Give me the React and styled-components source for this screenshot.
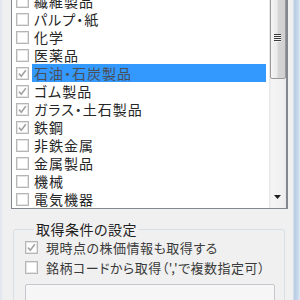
import React from 'react';
import styled, { createGlobalStyle } from 'styled-components';

const GlobalStyle = createGlobalStyle`
    html, body {
        margin: 0;
        padding: 0;
        background: #f0f0f0;
        overflow: hidden;
    }
    body {
        font-family: "Noto Sans CJK JP", "Noto Sans", sans-serif;
        font-feature-settings: "palt";
        color: #1e1e1e;
    }
`;

const Window = styled.div`
    display: flex;
    width: 300px;
    height: 300px;
    overflow: hidden;
    background: #f0f0f0;
`;

const LeftEdge = styled.div`
    width: 3px;
    background: linear-gradient(to right, #dfe5ec, #eceff3);
`;

const RightFrame = styled.div`
    width: 7px;
    background: linear-gradient(to right, #e4e9ef 0, #b9cde4 20%, #c6d8ec 70%, #e2ebf5 100%);
`;

const Main = styled.div`
    flex: 1;
    display: flex;
    flex-direction: column;
    padding: 0 5px 0 8px;
    min-width: 0;
`;

const ListBox = styled.div`
    display: flex;
    box-sizing: border-box;
    height: 223px;
    margin-top: -10px;
    border: 1px solid #828790;
    border-right-width: 2px;
    background: #fff;
`;

const Items = styled.div`
    flex: 1;
    overflow: hidden;
    padding: 1px 0 0 4px;
`;

const Row = styled.div`
    display: flex;
    align-items: center;
    height: 18px;
`;

const Label = styled.span`
    flex: 1;
    height: 18px;
    line-height: 18px;
    margin: 0 3px 0 3px;
    padding-left: 2px;
    font-size: 14px;
    letter-spacing: 1px;
    white-space: nowrap;
    color: ${(p) => (p.selected ? '#4a4f57' : '#262626')};
    background: ${(p) => (p.selected ? '#3399ff' : 'transparent')};
`;

const ScrollBar = styled.div`
    width: 17px;
    display: flex;
    flex-direction: column;
    background: linear-gradient(to right, #e6e6e6 0, #f4f4f4 15%, #f0f0f0 85%, #e8e8e8 100%);
`;

const Thumb = styled.div`
    height: 86px;
    margin: 0 0 0 1px;
    box-sizing: border-box;
    border: 1px solid #9a9a9a;
    border-radius: 2px;
    background: linear-gradient(to right, #f6f6f6, #e9e9e9 45%, #d6d6d6 50%, #d0d0d0);
    display: flex;
    align-items: center;
    justify-content: center;
    padding-bottom: 40px;
    padding-top: 46px;
`;

const Grip = styled.div`
    width: 7px;
    height: 8px;
    background: repeating-linear-gradient(to bottom, #3b3b3b 0, #3b3b3b 1px, #f4f4f4 1px, #f4f4f4 2px);
    margin-right: 2px;
`;

const Track = styled.div`
    flex: 1;
`;

const ArrowButton = styled.div`
    height: 17px;
    display: flex;
    align-items: flex-start;
    justify-content: center;
    padding-top: 4px;
    box-sizing: border-box;
`;

const Group = styled.fieldset`
    margin: 12px 0 0 2px;
    width: 272px;
    box-sizing: border-box;
    border: 1px solid #d5dfe5;
    border-radius: 3px;
    padding: 0 9px 0 11px;
    min-width: 0;
`;

const Legend = styled.legend`
    margin-left: 9px;
    padding: 0 2px;
    font-size: 14px;
    line-height: 16px;
    letter-spacing: 0.5px;
    color: #1e1e1e;
`;

const Option = styled.div`
    display: flex;
    align-items: center;
    height: 20px;
    gap: 8px;
    font-size: 13px;
    letter-spacing: 0.5px;
    color: #3a3a3a;
    white-space: nowrap;
`;

const CodeInput = styled.div`
    margin-top: 7px;
    height: 22px;
    border: 1px solid #c4c8cc;
    border-radius: 2px 2px 0 0;
    background: #f6f6f6;
`;

function CheckBox({ checked }) {
    return (
        <svg width="13" height="13" viewBox="0 0 13 13" style={{ flex: 'none' }}>
            <rect x="0.5" y="0.5" width="12" height="12" fill="#fafafa" stroke="#b6b6b6" />
            <rect x="1.5" y="1.5" width="10" height="10" fill="#fff" stroke="#e4e4e4" />
            {checked && (
                <path d="M3 6.6 L5.3 9.2 L9.8 3.2" fill="none" stroke="#a2a2a2" strokeWidth="1.6" />
            )}
        </svg>
    );
}

const industries = [
    { name: '繊維製品' },
    { name: 'パルプ・紙' },
    { name: '化学' },
    { name: '医薬品' },
    { name: '石油・石炭製品', checked: true, selected: true },
    { name: 'ゴム製品', checked: true },
    { name: 'ガラス・土石製品', checked: true },
    { name: '鉄鋼', checked: true },
    { name: '非鉄金属' },
    { name: '金属製品' },
    { name: '機械' },
    { name: '電気機器' },
];

export default function App() {
    return (
        <Window>
            <GlobalStyle />
            <LeftEdge />
            <Main>
                <ListBox>
                    <Items>
                        {industries.map((item) => (
                            <Row key={item.name}>
                                <CheckBox checked={item.checked} />
                                <Label selected={item.selected}>{item.name}</Label>
                            </Row>
                        ))}
                    </Items>
                    <ScrollBar>
                        <Thumb>
                            <Grip />
                        </Thumb>
                        <Track />
                        <ArrowButton>
                            <svg width="7" height="4" viewBox="0 0 7 4">
                                <path d="M0 0 H7 L3.5 4 Z" fill="#1e1e1e" />
                            </svg>
                        </ArrowButton>
                    </ScrollBar>
                </ListBox>
                <Group>
                    <Legend>取得条件の設定</Legend>
                    <Option>
                        <CheckBox checked />
                        現時点の株価情報も取得する
                    </Option>
                    <Option>
                        <CheckBox />
                        銘柄コードから取得（','で複数指定可）
                    </Option>
                    <CodeInput />
                </Group>
            </Main>
            <RightFrame />
        </Window>
    );
}
